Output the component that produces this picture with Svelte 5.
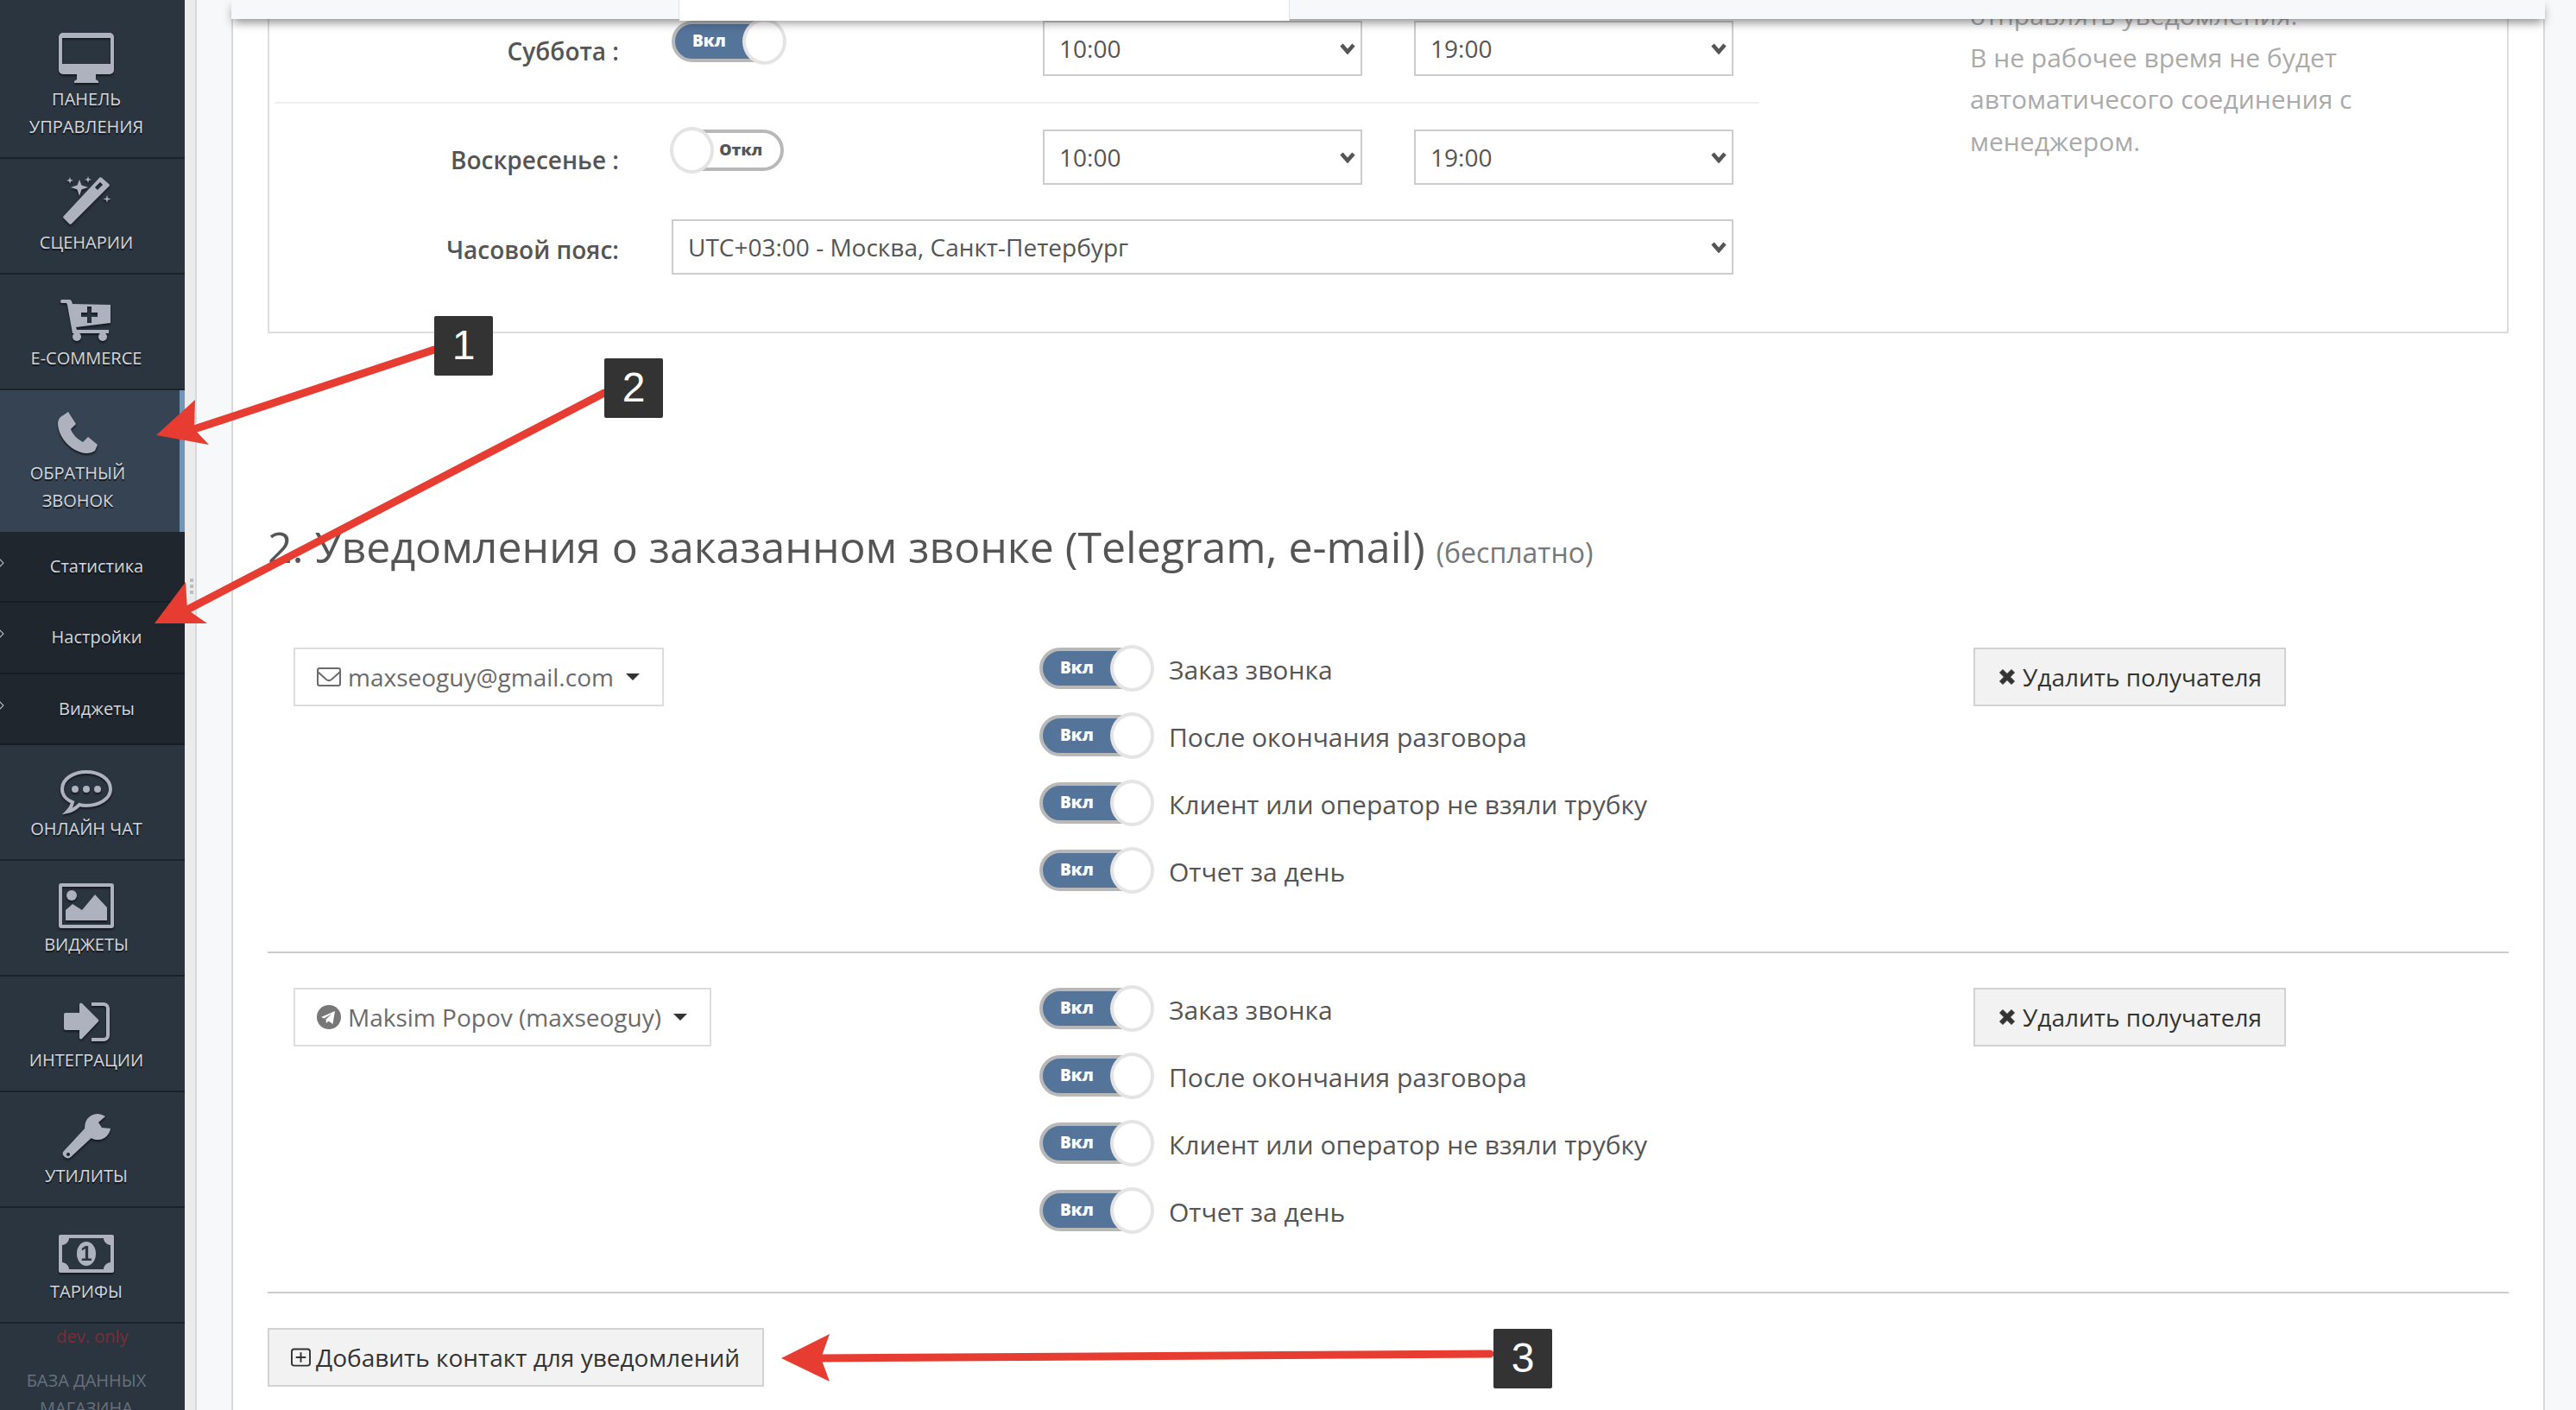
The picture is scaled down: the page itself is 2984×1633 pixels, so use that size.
<script>
  const events = ['Заказ звонка', 'После окончания разговора', 'Клиент или оператор не взяли трубку', 'Отчет за день'];
  const contacts = [{ kind: 'mail', name: 'maxseoguy@gmail.com' }, { kind: 'tg', name: 'Maksim Popov (maxseoguy)' }];
  const subs = ['Статистика', 'Настройки', 'Виджеты'];
</script>

{#snippet picker(value, cls)}
  <div class="sel {cls}">
    <select><option>{value}</option></select>
    <svg class="chev" viewBox="0 0 18 13"><path fill="none" stroke="#555" stroke-width="4.500" d="M2 2l7 8 7-8"/></svg>
  </div>
{/snippet}

<div class="page">
  <aside class="sidebar">
    <div class="item tall">
      <svg class="ico" viewBox="0 0 64 64"><path fill-rule="evenodd" d="M5 3h54a5 5 0 0 1 5 5v38a5 5 0 0 1-5 5H43v6l3 2v2H18v-2l3-2v-6H5a5 5 0 0 1-5-5V8a5 5 0 0 1 5-5zM4 9v30h56V9z"/></svg>
      <span>Панель<br />управления</span>
    </div>
    <div class="item">
      <svg class="ico" viewBox="0 0 64 64"><path fill-rule="evenodd" d="M50 5l8 7a2 2 0 0 1 0 3L15 58a2 2 0 0 1-3 0l-6-6a2 2 0 0 1 0-3L47 5a2 2 0 0 1 3 0zM48 10l-6 6 3 3 6-6z"/><path d="M24 7l2.500 6.500L34 16l-7.500 2.500L24 26l-2.500-7.500L14 16l7.500-2.500zM13 4l1 3 3 1-3 1-1 3-1-3-3-1 3-1zM34 3l1 3 3 1-3 1-1 3-1-3-3-1 3-1zM56 25l1 3.500 3.500 1-3.500 1-1 3.500-1-3.500-3.500-1 3.500-1z"/></svg>
      <span>Сценарии</span>
    </div>
    <div class="item">
      <svg class="ico" viewBox="0 0 64 64"><path fill-rule="evenodd" d="M4 12h8a3 3 0 0 1 3 2l1 3 44 1v21l-40 5 1 3h37v4H16l-6-33-1-2H4a2 2 0 0 1 0-4zM33 20v7h-7v5h7v7h5v-7h7v-5h-7v-7z"/><circle cx="21" cy="55" r="5"/><circle cx="51" cy="55" r="5"/></svg>
      <span>E-commerce</span>
    </div>
    <div class="item active">
      <svg class="ico" viewBox="0 0 64 64"><path d="M12 15l9-6 9 14-6 6c2 6 8 12 14 15l6-6 11 9-3 7c-4 3-10 4-16 2C22 52 10 38 9 23c0-3 1-6 3-8z"/></svg>
      <span>Обратный<br />звонок</span>
    </div>
    {#each subs as s}
      <div class="sub">{s}</div>
    {/each}
    <div class="item">
      <svg class="ico" viewBox="0 0 64 64"><path fill="none" stroke-width="4" d="M32 14c15 0 28 8 28 20 0 11-13 19-28 19-3 0-5 0-8-1-4 4-9 7-14 8 3-3 5-6 6-11C8 46 4 40 4 34c0-12 13-20 28-20z"/><circle cx="19" cy="34" r="4"/><circle cx="32" cy="34" r="4"/><circle cx="45" cy="34" r="4"/></svg>
      <span>Онлайн чат</span>
    </div>
    <div class="item">
      <svg class="ico" viewBox="0 0 64 64"><path fill-rule="evenodd" d="M3 9h58a3 3 0 0 1 3 3v46a3 3 0 0 1-3 3H3a3 3 0 0 1-3-3V12a3 3 0 0 1 3-3zM4 13v44h56V13z"/><circle cx="15" cy="23" r="6"/><path d="M8 52V40l8-7 11 7 15-18 14 15v15z"/></svg>
      <span>Виджеты</span>
    </div>
    <div class="item">
      <svg class="ico" viewBox="0 0 64 64"><path d="M8 25h16V15a2 2 0 0 1 3-1l19 19a2 2 0 0 1 0 2L27 55a2 2 0 0 1-3-1V45H8a2 2 0 0 1-2-2V27a2 2 0 0 1 2-2z"/><path fill="none" stroke-width="4" d="M38 15h14a5 5 0 0 1 5 5v31a5 5 0 0 1-5 5H38"/></svg>
      <span>Интеграции</span>
    </div>
    <div class="item">
      <svg class="ico" viewBox="0 0 64 64"><path d="M54 11A15 15 0 1 0 60 25L50 24 46 18z"/><path fill-rule="evenodd" d="M31 24l10 9-27 25a5 5 0 0 1-7 0l-1-1a4 4 0 0 1 0-6zM11 53a2 2 0 1 0 0 4 2 2 0 0 0 0-4z"/></svg>
      <span>Утилиты</span>
    </div>
    <div class="item">
      <svg class="ico" viewBox="0 0 64 64"><rect y="14" width="64" height="44" rx="2"/><path class="cut" d="M12 18h40c0 4 4 8 8 8v20c-4 0-8 4-8 8H12c0-4-4-8-8-8V26c4 0 8-4 8-8z"/><ellipse cx="32" cy="36" rx="11" ry="14"/><text class="one" x="32" y="44" text-anchor="middle">1</text></svg>
      <span>Тарифы</span>
    </div>
    <div class="dev">dev. only</div>
    <div class="dim">База данных<br />магазина</div>
  </aside>

  <div class="gutter"><i></i><i></i><i></i></div>

  <main class="panel">
    <section class="hours">
      <div class="form">
        <div class="row first">
          <div class="day">Суббота :</div>
          <div class="switchcell"><div class="toggle on"><b>Вкл</b><i></i></div></div>
          {@render picker('10:00', '')}
          {@render picker('19:00', '')}
        </div>
        <div class="row">
          <div class="day">Воскресенье :</div>
          <div class="switchcell"><div class="toggle off"><b>Откл</b><i></i></div></div>
          {@render picker('10:00', '')}
          {@render picker('19:00', '')}
        </div>
        <div class="row zone">
          <div class="day">Часовой пояс:</div>
          {@render picker('UTC+03:00 - Москва, Санкт-Петербург', 'wide')}
        </div>
      </div>
      <p class="note">отправлять уведомления.<br />В не рабочее время не будет<br />автоматичесого соединения с<br />менеджером.</p>
    </section>

    <h2>2. Уведомления о заказанном звонке (Telegram, e-mail) <small>(бесплатно)</small></h2>

    {#each contacts as c}
      <section class="group">
        <div class="contact">
          <div class="drop">
            {#if c.kind === 'mail'}
              <svg class="fa" viewBox="0 0 28 22"><path fill="none" stroke="#6b6b6b" stroke-width="2" d="M3 1h22a2 2 0 0 1 2 2v16a2 2 0 0 1-2 2H3a2 2 0 0 1-2-2V3a2 2 0 0 1 2-2zM1 5l10 9c2 1.500 4 1.500 6 0l10-9"/></svg>
            {:else}
              <svg class="fa tg" viewBox="0 0 28 28"><circle cx="14" cy="14" r="14" fill="#777"/><path fill="#fff" d="M5 14l16-7-2.500 15-5-3.500-2.500 2.500-.5-4.500 7-6.500-9 5.500z"/></svg>
            {/if}
            <span>{c.name}</span>
            <em></em>
          </div>
        </div>
        <div class="events">
          {#each events as e}
            <div class="event"><div class="toggle on"><b>Вкл</b><i></i></div><span>{e}</span></div>
          {/each}
        </div>
        <button class="btn del">
          <svg class="x" viewBox="0 0 20 20"><path fill="#333" stroke="#333" stroke-width="1" stroke-linejoin="round" d="M5 1.500l5 5 5-5 3.500 3.500-5 5 5 5-3.500 3.500-5-5-5 5L1.500 15l5-5-5-5z"/></svg>
          Удалить получателя
        </button>
      </section>
    {/each}

    <button class="btn add">
      <svg class="plus" viewBox="0 0 24 22"><path fill="none" stroke="#333" stroke-width="2" d="M4 1h16a3 3 0 0 1 3 3v14a3 3 0 0 1-3 3H4a3 3 0 0 1-3-3V4a3 3 0 0 1 3-3zM12 5v12M6 11h12"/></svg>
      Добавить контакт для уведомлений
    </button>
  </main>

  <div class="topbar"><div class="tab"></div><div class="tab white"></div><div class="tab rest"></div></div>

  <svg class="marks" viewBox="0 0 2984 1633">
    <g stroke="#e63c31" stroke-width="9" stroke-linecap="round" fill="none">
      <path d="M503 405L225 497" />
      <path d="M700 455L217 706" />
      <path d="M1726 1568L951 1573" />
    </g>
    <g fill="#e63c31">
      <path d="M181 504L226 463L225 497L242 515z" />
      <path d="M179 722L215 674L217 706L240 722z" />
      <path d="M905 1573L961 1545L951 1573L961 1600z" />
    </g>
  </svg>
  <div class="num n1">1</div>
  <div class="num n2">2</div>
  <div class="num n3">3</div>
</div>

<style>
  :global(body) { margin: 0; overflow: hidden; background: #f7f8fa; }
  .page { position: relative; display: flex; width: 2984px; height: 1633px; overflow: hidden; font-family: "Open Sans", sans-serif; color: #555; background: #f7f8fa; }

  .sidebar { flex: none; width: 214px; height: 1633px; overflow: hidden; background: #2b3540; color: #d3d6db; font-size: 20px; line-height: 32px; text-align: center; text-transform: uppercase; text-shadow: 0 2px 1px #12161b; }
  .item { box-sizing: border-box; display: flex; flex-direction: column; align-items: center; justify-content: flex-end; height: 134px; padding: 0 14px 19px 0; border-bottom: 2px solid #1c2229; }
  .item.tall { height: 184px; }
  .item.active { height: 164px; padding-right: 28px; padding-bottom: 20px; background: #364352; border-right: 6px solid #7095b8; border-bottom: 0; }
  .ico { display: block; flex: none; width: 64px; height: 64px; overflow: visible; fill: #aeb2be; stroke: #aeb2be; stroke-width: 0; filter: drop-shadow(0 2px 1px #14181d); }
  .ico .cut { fill: #2b3540; }
  .ico .one { fill: #2b3540; font: 700 24px "Liberation Sans", sans-serif; text-shadow: none; }
  .sub { position: relative; box-sizing: border-box; height: 82.300px; padding-left: 10px; padding-top: 24px; overflow: hidden; background: #20262e; border-bottom: 2px solid #191d23; text-transform: none; }
  .sub::before { content: ""; position: absolute; left: -5px; top: 32px; width: 6px; height: 6px; border: 1px solid #c8ccd2; transform: rotate(45deg); }
  .sub:last-of-type { border-bottom-width: 3px; }
  .dev { height: 30px; line-height: 30px; color: #7a2e33; text-transform: none; text-shadow: none; }
  .dim { margin-top: 20px; padding-right: 14px; color: #68707a; text-shadow: none; }

  .gutter { flex: none; display: flex; flex-direction: column; align-items: center; justify-content: center; gap: 3px; box-sizing: border-box; width: 54px; padding: 0 40px 276px 2px; background: linear-gradient(to right, #ebebeb 0 12px, #d9d9d9 12px 14px, #f7f8fa 14px); }
  .gutter i { flex: none; width: 4px; height: 4px; background: #bdbdbd; }

  .panel { flex: none; box-sizing: border-box; width: 2680px; height: 1700px; padding: 0 40px 0 40px; background: #fff; border-left: 2px solid #d9d9d9; border-right: 2px solid #d9d9d9; }

  .hours { display: flex; box-sizing: border-box; width: 2596px; height: 406px; margin-top: -20px; padding: 42px 0 0 6px; border: 2px solid #ddd; }
  .form { flex: none; width: 1720px; }
  .row { display: flex; align-items: flex-start; }
  .row.first { padding-bottom: 30px; margin-bottom: 30px; border-bottom: 2px solid #eee; }
  .row.zone { margin-top: 40px; }
  .day { flex: none; box-sizing: border-box; width: 399px; height: 64px; margin-right: 61px; padding-top: 3px; font-size: 28px; font-weight: 600; line-height: 64px; text-align: right; }
  .switchcell { flex: none; width: 430px; }
  .sel { position: relative; flex: none; width: 370px; height: 64px; margin-right: 60px; }
  .sel.wide { width: 1230px; margin-right: 0; }
  select { display: block; box-sizing: border-box; width: 100%; height: 64px; margin: 0; padding: 0 0 0 17px; font: 28px "Open Sans", sans-serif; color: #555; background: #fff; border: 2px solid #ccc; border-radius: 0; appearance: none; }
  .chev { position: absolute; right: 8px; top: 26px; width: 18px; height: 13px; }
  .note { margin: -30px 0 0 244px; font-size: 30px; line-height: 48.600px; color: #aaa; white-space: nowrap; }

  h2 { height: 72px; margin: 212px 0 80px; font-size: 50px; font-weight: 400; line-height: 70px; white-space: nowrap; }
  h2 small { font-size: 32px; color: #777; }

  .group { display: flex; align-items: flex-start; width: 2596px; margin-bottom: 40px; padding-bottom: 40px; border-bottom: 2px solid #ccc; }
  .contact { flex: none; box-sizing: border-box; width: 894px; padding-left: 30px; }
  .drop { display: inline-flex; align-items: center; box-sizing: border-box; height: 68px; padding: 0 26px 0 25px; font-size: 28px; color: #6b6b6b; white-space: nowrap; border: 2px solid #ddd; }
  .drop span { margin: 0 14px 0 8px; }
  .drop em { width: 0; height: 0; border-top: 8px solid #333; border-left: 8px solid transparent; border-right: 8px solid transparent; }
  .fa { flex: none; width: 28px; height: 22px; }
  .fa.tg { height: 28px; }
  .events { flex: none; width: 1082px; }
  .event { display: flex; align-items: center; height: 78px; margin-top: -15px; margin-bottom: 15px; font-size: 30px; }
  .event span { margin-left: 18px; padding-top: 2px; white-space: nowrap; }

  .toggle { position: relative; flex: none; box-sizing: border-box; width: 132px; height: 48px; border: 4px solid #b8b8b8; border-radius: 24px; font: 700 19px/40px "Open Sans", sans-serif; }
  .toggle i { position: absolute; top: -7px; box-sizing: border-box; width: 51px; height: 54px; background: #fff; border: 4px solid #e4e4e4; border-radius: 50%; }
  .toggle b { position: absolute; top: -1px; }
  .toggle.on { background: #55749a; color: #fff; }
  .toggle.on b { left: 20px; }
  .toggle.on i { right: -5px; }
  .toggle.off { width: 130px; color: #555; font-size: 18px; }
  .toggle.off b { right: 21px; }
  .toggle.off i { left: -6px; }

  .btn { display: inline-flex; align-items: center; box-sizing: border-box; height: 68px; padding: 0 26px 0 27px; font: 28px "Open Sans", sans-serif; color: #333; white-space: nowrap; background: #f2f2f2; border: 2px solid #d2d2d2; }
  .btn.add { padding-left: 25px; }
  .x { flex: none; width: 20px; height: 20px; margin-right: 8px; }
  .plus { flex: none; width: 23px; height: 22px; margin-right: 6px; }

  .topbar { position: absolute; left: 268px; top: 0; display: flex; width: 2680px; height: 22px; background: #f7f8fa; box-shadow: 0 6px 12px -2px rgba(0, 0, 0, .45); }
  .tab { flex: none; width: 518px; height: 22px; background: #f7f8fa; border-right: 1px solid #e2e2e2; }
  .tab.white { width: 706px; height: 24px; background: #fff; }
  .tab.rest { flex: 1; border: 0; }

  .marks { position: absolute; left: 0; top: 0; width: 2984px; height: 1633px; pointer-events: none; }
  .num { position: absolute; width: 68px; height: 69px; font: 48px/67px "Liberation Sans", sans-serif; color: #fff; text-align: center; background: #333; border-radius: 2px; }
  .n1 { left: 503px; top: 366px; }
  .n2 { left: 700px; top: 415px; }
  .n3 { left: 1730px; top: 1539px; }
</style>
